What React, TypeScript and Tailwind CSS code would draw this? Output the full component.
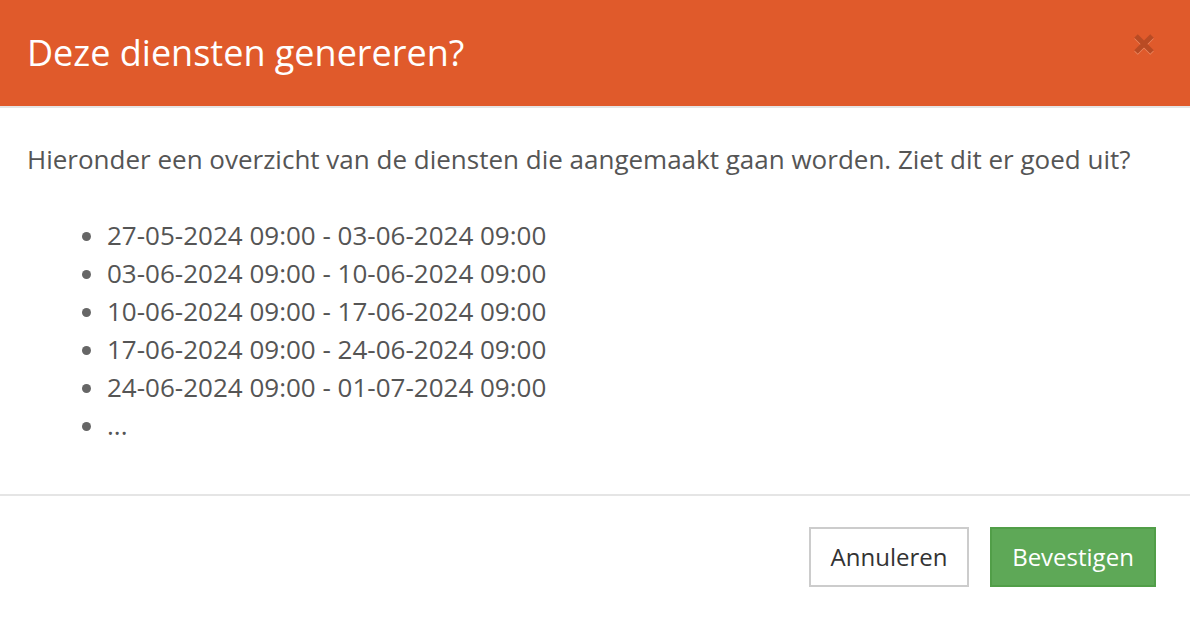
const ITEMS = [
  '27-05-2024 09:00 - 03-06-2024 09:00',
  '03-06-2024 09:00 - 10-06-2024 09:00',
  '10-06-2024 09:00 - 17-06-2024 09:00',
  '17-06-2024 09:00 - 24-06-2024 09:00',
  '24-06-2024 09:00 - 01-07-2024 09:00',
  '...',
]

export default function App() {
  return (
    <div className="w-[1190px] h-[624px] bg-white flex flex-col font-['Open_Sans',sans-serif] text-[#555]">
      <header className="h-[108px] bg-[#e05a2b] border-b-2 border-[#e5e5e5] flex items-start justify-between pl-[27px] pr-[36px] shrink-0">
        <h1 className="text-[36px] text-white leading-none mt-[35px]">Deze diensten genereren?</h1>
        {/* bootstrap-ish close: faded black cross with a light shadow below */}
        <button type="button" aria-label="Sluiten" className="mt-[34px]">
          <svg width="20" height="22" viewBox="0 0 20 22">
            <g strokeWidth="5" strokeLinecap="butt">
              <path d="M2 3 L18 19 M18 3 L2 19" stroke="#ee8a63" />
              <path d="M2 2 L18 18 M18 2 L2 18" stroke="#b94b24" />
            </g>
          </svg>
        </button>
      </header>

      <section className="px-[27px] pt-[36px] h-[388px] border-b-2 border-[#e5e5e5] shrink-0">
        <p className="text-[26px] leading-[30px]">
          Hieronder een overzicht van de diensten die aangemaakt gaan worden. Ziet dit er goed uit?
        </p>
        <ul className="list-disc pl-[80px] mt-[42px] text-[26px] leading-[38px] marker:text-[#666]">
          {ITEMS.map((item) => (
            <li key={item}>{item}</li>
          ))}
        </ul>
      </section>

      <footer className="flex justify-end gap-[21px] pt-[31px] pr-[34px]">
        <button
          type="button"
          className="w-[160px] h-[60px] border-2 border-[#ccc] bg-white text-[#333] text-[24px]"
        >
          Annuleren
        </button>
        <button
          type="button"
          className="w-[166px] h-[60px] border-2 border-[#519e48] bg-[#5ea857] text-white text-[24px]"
        >
          Bevestigen
        </button>
      </footer>
    </div>
  )
}
